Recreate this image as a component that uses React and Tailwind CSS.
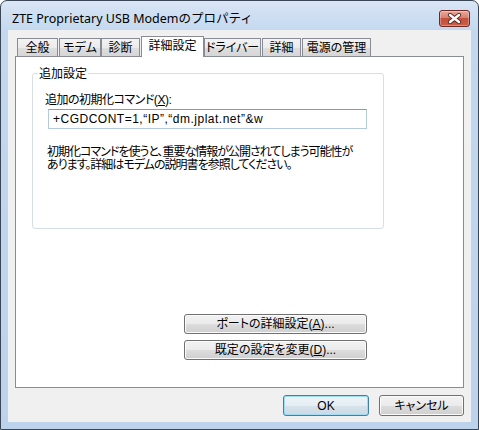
import React from 'react';

const TABS = [
  { label: '全般', cls: 'w-[41px]' },
  { label: 'モデム', cls: 'w-[42px] ml-[1px]' },
  { label: '診断', cls: 'w-[39px]' },
  { label: '詳細設定', cls: 'w-[63px] ml-[1px]', active: true },
  { label: 'ドライバー', cls: 'w-[57px]' },
  { label: '詳細', cls: 'w-[39px] ml-[1px]' },
  { label: '電源の管理', cls: 'w-[69px] ml-[1px]' },
];

const CloseButton = () => (
  <div className="flex items-center justify-center w-[31px] h-[17px] mt-[9px] rounded-[3px] border border-[#6b2b24] bg-[linear-gradient(#e9a99b,#d98170_45%,#c5503d_50%,#cb5e47)] shadow-[inset_0_0_0_1px_rgba(255,255,255,0.3)]">
    <svg width="15" height="11" viewBox="0 0 15 11">
      <path d="M3 2 L12 9 M12 2 L3 9" stroke="#5a2a24" strokeWidth="4.2" strokeLinecap="round" fill="none" />
      <path d="M3 2 L12 9 M12 2 L3 9" stroke="#ffffff" strokeWidth="2.4" strokeLinecap="round" fill="none" />
    </svg>
  </div>
);

const Tab = ({ label, cls, active }) => {
  if (active) {
    return (
      <div className={`${cls} relative z-10 h-[21px] -mb-[1px] flex items-start justify-center pt-[2px] border border-b-0 border-[#898c95] bg-white`}>
        {label}
      </div>
    );
  }
  return (
    <div className={`${cls} h-[18px] flex items-center justify-center border border-b-0 border-[#898c95] bg-[linear-gradient(#f3f3f3,#ebebeb_50%,#dedede_50%,#d6d6d6)]`}>
      {label}
    </div>
  );
};

// 윈도우 7 스타일 버튼
const WinButton = ({ children, className = '', isDefault }) => (
  <button
    className={`${className} flex items-center justify-center rounded-[3px] border text-black ${
      isDefault
        ? 'border-[#3c7fb1] shadow-[inset_0_0_0_1px_#9fdcf6] bg-[linear-gradient(#eef4f8,#e5eef4_50%,#d7e3ec_50%,#cbd9e4)]'
        : 'border-[#707070] shadow-[inset_0_0_0_1px_#fbfbfb] bg-[linear-gradient(#f2f2f2,#ebebeb_50%,#dddddd_50%,#cfcfcf)]'
    }`}
  >
    {children}
  </button>
);

export default function App() {
  return (
    <div className="w-[479px] h-[430px] bg-white">
      <div className="flex flex-col w-[479px] h-[430px] rounded-t-[7px] border border-[#3a4655] bg-[linear-gradient(#d9e6f5,#c3d8ef_30px,#bcd3eb)] overflow-hidden">
        {/* 타이틀 바 */}
        <div className="flex items-start justify-between h-[29px] pl-[11px] pr-[8px]">
          <span className="mt-[9px] leading-[18px] text-[12.5px] text-black font-['Noto_Sans','Noto_Sans_CJK_JP',sans-serif]">
            ZTE Proprietary USB Modemのプロパティ
          </span>
          <CloseButton />
        </div>

        {/* 클라이언트 영역 */}
        <div className="flex flex-col h-[392px] mx-[7px] px-[7px] bg-[#f0f0f0] text-[12px] leading-[14px] text-black font-['Liberation_Sans','Noto_Sans_CJK_JP',sans-serif] [font-feature-settings:'palt']">
          <div className="flex items-end h-[20px] mt-[6px] pl-[2px]">
            {TABS.map((tab) => (
              <Tab key={tab.label} {...tab} />
            ))}
          </div>

          <div className="flex flex-col h-[332px] border border-[#898c95] bg-white">
            {/* 추가 설정 그룹 */}
            <div className="relative w-[352px] h-[156px] ml-[16px] mt-[16px] border border-[#d5dfe5] rounded-[3px]">
              <span className="absolute left-[5px] -top-[7px] px-[1px] bg-white">追加設定</span>
              <div className="flex flex-col pt-[19px]">
                <span className="ml-[12px] tracking-[-0.5px]">
                  追加の初期化コマンド(<span className="underline">X</span>):
                </span>
                <div className="flex items-center w-[319px] h-[20px] ml-[15px] mt-[2px] pl-[4px] tracking-[0.5px] border border-[#b5cadb] border-t-[#7f9db9]">
                  +CGDCONT=1,“IP”,“dm.jplat.net”&amp;w
                </div>
                <p className="ml-[14px] mt-[17px] leading-[13px] tracking-[-1px] whitespace-nowrap">
                  初期化コマンドを使うと、重要な情報が公開されてしまう可能性が
                  <br />
                  あります。詳細はモデムの説明書を参照してください。
                </p>
              </div>
            </div>

            <div className="flex flex-col gap-[6px] ml-[168px] mt-[85px]">
              <WinButton className="w-[183px] h-[20px]">
                ポートの詳細設定(<span className="underline">A</span>)...
              </WinButton>
              <WinButton className="w-[183px] h-[20px]">
                既定の設定を変更(<span className="underline">D</span>)...
              </WinButton>
            </div>
          </div>

          <div className="flex justify-end gap-[10px] mt-[7px]">
            <WinButton className="w-[86px] h-[21px]" isDefault>
              OK
            </WinButton>
            <WinButton className="w-[85px] h-[21px]">キャンセル</WinButton>
          </div>
        </div>
      </div>
    </div>
  );
}
